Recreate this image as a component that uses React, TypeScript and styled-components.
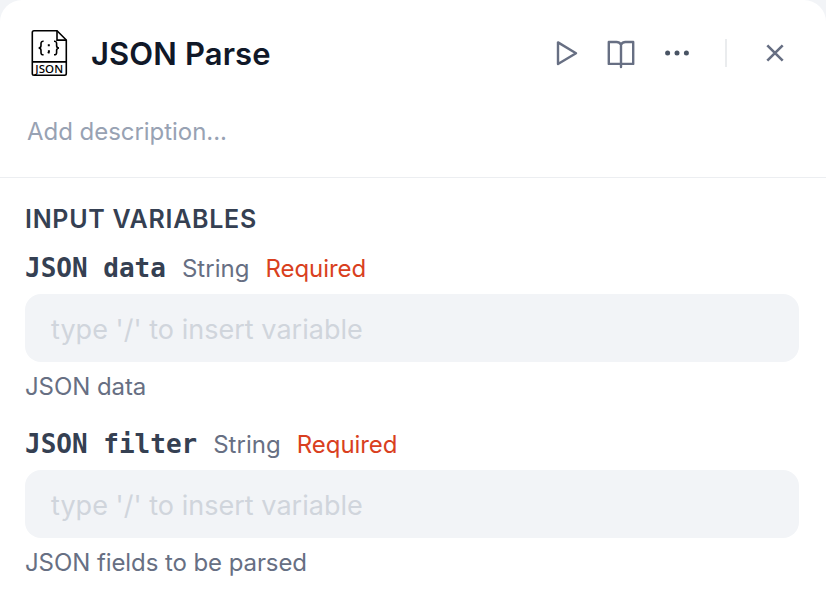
import React from 'react';
import styled, { createGlobalStyle } from 'styled-components';

const GlobalStyle = createGlobalStyle`
  * { box-sizing: border-box; }
  body { margin: 0; background: #f2f4f7; font-family: Inter, "Liberation Sans", sans-serif; }
`;

const Panel = styled.main`
  width: 826px;
  height: 598px;
  background: #fff;
  border-radius: 22px 22px 0 0;
  overflow: hidden;
`;

const Header = styled.header`
  height: 178px;
  padding: 29px 27px 0 28px;
  border-bottom: 1px solid #eceef1;
`;

const TitleRow = styled.div`
  display: flex;
  align-items: center;
  height: 48px;
`;

const Title = styled.h1`
  flex: 1;
  margin: 2px 0 0 21px;
  font-size: 31px;
  font-weight: 600;
  line-height: 48px;
  letter-spacing: 0.12px;
  color: #101828;
`;

const Actions = styled.div`
  display: flex;
  align-items: center;
`;

const IconButton = styled.button<{ $gap: number }>`
  display: flex;
  width: 32px;
  height: 32px;
  margin: 0 ${(p) => p.$gap}px 0 0;
  padding: 0;
  border: 0;
  background: none;
  color: #676f83;
`;

const Separator = styled.span`
  width: 2px;
  height: 28px;
  margin-right: 32px;
  background: #eaecee;
`;

const Description = styled.p`
  margin: 35px 0 0 -1px;
  font-size: 24px;
  line-height: 40px;
  letter-spacing: -0.04px;
  color: #98a2b3;
`;

const Body = styled.section`
  padding: 21px 27px 0 25px;
`;

const SectionTitle = styled.h2`
  margin: 0 0 4px;
  font-size: 25px;
  font-weight: 600;
  line-height: 40px;
  letter-spacing: 0.72px;
  color: #354052;
`;

const Field = styled.div`
  margin-bottom: 7px;
`;

const LabelRow = styled.div`
  display: flex;
  align-items: baseline;
  height: 51px;
  line-height: 50px;
`;

const Name = styled.label`
  font-family: "DejaVu Sans Mono", monospace;
  font-size: 26px;
  font-weight: 700;
  color: #354052;
`;

const Tag = styled.span<{ $required?: boolean }>`
  margin-left: 16px;
  font-size: 24px;
  letter-spacing: ${(p) => (p.$required ? '-0.05px' : '0.03px')};
  color: ${(p) => (p.$required ? '#d93f20' : '#676f83')};
`;

const Input = styled.div`
  height: 68px;
  padding: 1px 26px 0;
  border-radius: 16px;
  background: #f2f4f7;
  font-size: 27px;
  line-height: 70px;
  letter-spacing: 0.03px;
  color: #d0d5dc;
`;

const Help = styled.p`
  margin: 0;
  font-size: 24px;
  line-height: 50px;
  letter-spacing: -0.08px;
  color: #676f83;
`;

const JsonText = styled.text`
  font-family: "Noto Sans", sans-serif;
  font-size: 11.5px;
  font-weight: 500;
`;

function JsonFileIcon() {
  return (
    <svg width="42" height="48" viewBox="28 29 42 48" fill="none" stroke="#000" strokeWidth="1.6">
      <path d="M34 30.7H57L66.3 40V73.5Q66.3 75.2 64.6 75.2H34Q32.3 75.2 32.3 73.5V32.4Q32.3 30.7 34 30.7Z" />
      <path d="M57 30.7V40.1H66.3M32.3 61.9H66.3" />
      <path d="M43.6 41.3Q41 41.1 41 43.5V45.6Q41 48 38.6 48Q41 48 41 50.4V52.6Q41 55 43.6 54.8M54 41.3Q56.6 41.1 56.6 43.5V45.6Q56.6 48 59 48Q56.6 48 56.6 50.4V52.6Q56.6 55 54 54.8" />
      <path d="M48.8 44.2V46.2M48.9 50.2V51.8L48.3 53.3" strokeWidth="2" />
      <JsonText x="35.2" y="73.1" textLength="28" fill="#000" stroke="none">JSON</JsonText>
    </svg>
  );
}

const stroke = {
  width: 32, height: 32, fill: 'none', stroke: 'currentColor',
  strokeWidth: 2.4, strokeLinejoin: 'round', strokeLinecap: 'round',
} as const;

const fields = [
  { name: 'JSON data', type: 'String', help: 'JSON data' },
  { name: 'JSON filter', type: 'String', help: 'JSON fields to be parsed' },
];

export default function App() {
  return (
    <>
      <GlobalStyle />
      <Panel>
        <Header>
          <TitleRow>
            <JsonFileIcon />
            <Title>JSON Parse</Title>
            <Actions>
              <IconButton $gap={22} aria-label="Run">
                <svg {...stroke} viewBox="551 37 32 32"><path d="M558 42.4V64L576 53.2Z" /></svg>
              </IconButton>
              <IconButton $gap={24} aria-label="Documentation">
                <svg {...stroke} viewBox="605 37 32 32">
                  <path d="M621 44.6Q619.5 42 616.5 42H608.8V63.9H633.2V42H625.5Q622.5 42 621 44.6V67" />
                </svg>
              </IconButton>
              <IconButton $gap={32} aria-label="More">
                <svg width="32" height="32" viewBox="661 37 32 32" fill="#495464">
                  <circle cx="667.6" cy="53" r="2.5" /><circle cx="677" cy="53" r="2.5" /><circle cx="686.4" cy="53" r="2.5" />
                </svg>
              </IconButton>
              <Separator />
              <IconButton $gap={8} aria-label="Close">
                <svg {...stroke} strokeLinecap="butt" strokeWidth={2.6} viewBox="759 37 32 32"><path d="M767.3 45.3L782.7 60.7M782.7 45.3L767.3 60.7" /></svg>
              </IconButton>
            </Actions>
          </TitleRow>
          <Description>Add description...</Description>
        </Header>
        <Body>
          <SectionTitle>INPUT VARIABLES</SectionTitle>
          {fields.map((f) => (
            <Field key={f.name}>
              <LabelRow>
                <Name>{f.name}</Name>
                <Tag>{f.type}</Tag>
                <Tag $required>Required</Tag>
              </LabelRow>
              <Input>type '/' to insert variable</Input>
              <Help>{f.help}</Help>
            </Field>
          ))}
        </Body>
      </Panel>
    </>
  );
}
